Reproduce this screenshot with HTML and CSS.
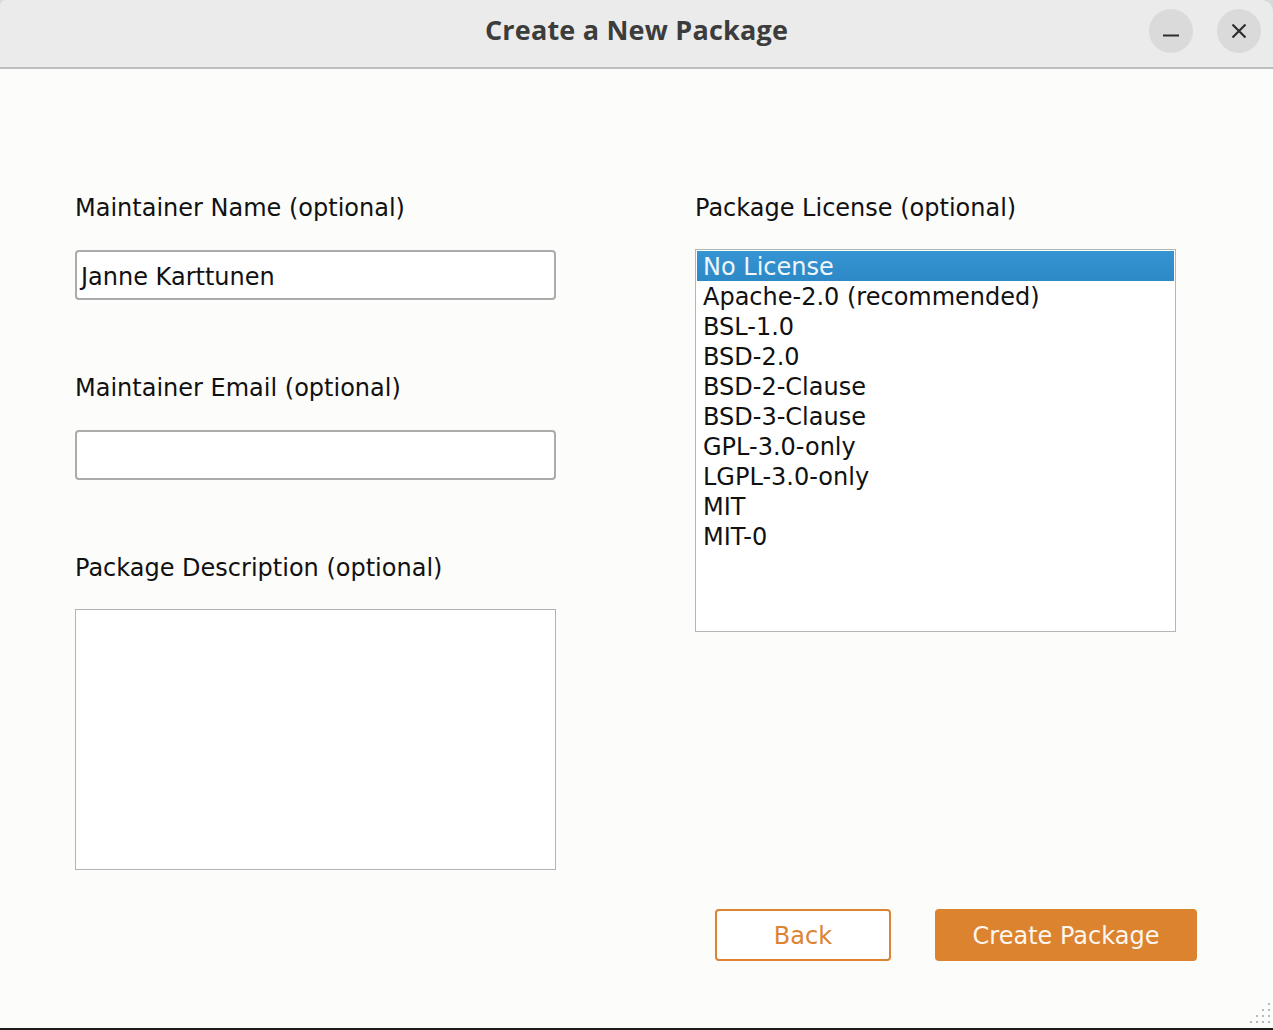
FILE: index.html
```html
<!DOCTYPE html>
<html>
<head>
<meta charset="utf-8">
<title>Create a New Package</title>
<link rel="stylesheet" href="styles.css">
</head>
<body>
<div class="window">
  <header class="titlebar">
    <div class="title">Create a New Package</div>
    <div class="controls">
      <button class="wbtn" aria-label="Minimize">
        <svg width="20" height="20" viewBox="0 0 20 20"><path d="M2 14.5H18" stroke="#2e2e2e" stroke-width="2"/></svg>
      </button>
      <button class="wbtn" aria-label="Close">
        <svg width="20" height="20" viewBox="0 0 20 20"><path d="M3.5 3.5L16.5 16.5M16.5 3.5L3.5 16.5" stroke="#2e2e2e" stroke-width="2.2"/></svg>
      </button>
    </div>
  </header>
  <main class="content">
    <div class="form">
      <div class="col">
        <div class="field">
          <label class="label">Maintainer Name (optional)</label>
          <div class="input">Janne Karttunen</div>
        </div>
        <div class="field">
          <label class="label">Maintainer Email (optional)</label>
          <div class="input"></div>
        </div>
        <div class="field">
          <label class="label">Package Description (optional)</label>
          <div class="textarea"></div>
        </div>
      </div>
      <div class="col">
        <div class="field">
          <label class="label">Package License (optional)</label>
          <ul class="list">
            <li class="item selected">No License</li>
            <li class="item">Apache-2.0 (recommended)</li>
            <li class="item">BSL-1.0</li>
            <li class="item">BSD-2.0</li>
            <li class="item">BSD-2-Clause</li>
            <li class="item">BSD-3-Clause</li>
            <li class="item">GPL-3.0-only</li>
            <li class="item">LGPL-3.0-only</li>
            <li class="item">MIT</li>
            <li class="item">MIT-0</li>
          </ul>
        </div>
      </div>
    </div>
    <div class="actions">
      <button class="btn btn-outline">Back</button>
      <button class="btn btn-primary">Create Package</button>
    </div>
    <svg class="grip" width="22" height="22" viewBox="0 0 22 22">
      <g fill="#b9b9b9">
        <rect x="19" y="0" width="2" height="2"/>
        <rect x="13" y="6" width="2" height="2"/><rect x="19" y="6" width="2" height="2"/>
        <rect x="7" y="12" width="2" height="2"/><rect x="13" y="12" width="2" height="2"/><rect x="19" y="12" width="2" height="2"/>
        <rect x="1" y="18" width="2" height="2"/><rect x="7" y="18" width="2" height="2"/><rect x="13" y="18" width="2" height="2"/><rect x="19" y="18" width="2" height="2"/>
      </g>
    </svg>
  </main>
  <div class="desktop-edge"></div>
</div>
</body>
</html>
```
FILE: styles.css
```css
* { box-sizing: border-box; }
html, body {
  margin: 0;
  padding: 0;
  width: 1273px;
  height: 1030px;
  overflow: hidden;
  background: #d9d9d9;
}
.window {
  width: 1273px;
  height: 1030px;
  display: flex;
  flex-direction: column;
  font-family: "DejaVu Sans", sans-serif;
  color: #111;
}
.titlebar {
  height: 69px;
  flex: none;
  background: #ebebeb;
  border-bottom: 2px solid #bdbdbd;
  border-top-left-radius: 6px;
  border-top-right-radius: 12px;
  display: flex;
  align-items: center;
  justify-content: center;
  position: relative;
}
.title {
  font-family: "Open Sans", "Noto Sans", sans-serif;
  font-weight: 700;
  font-size: 27px;
  color: #3c3c3c;
  letter-spacing: 0.2px;
  margin-top: -9px;
}
.controls {
  position: absolute;
  right: 12px;
  top: 9px;
  display: flex;
  gap: 24px;
}
.wbtn {
  width: 44px;
  height: 44px;
  border-radius: 50%;
  border: none;
  background: #dadada;
  padding: 0;
  display: flex;
  align-items: center;
  justify-content: center;
}
.content {
  flex: 1;
  background: #fcfcfa;
  position: relative;
  padding-top: 124px;
}
.form {
  display: grid;
  grid-template-columns: 481px 481px;
  column-gap: 139px;
  padding-left: 75px;
}
.col {
  display: flex;
  flex-direction: column;
  gap: 73px;
}
.field {
  display: flex;
  flex-direction: column;
}
.label {
  font-size: 24px;
  line-height: 30px;
  height: 30px;
  margin-bottom: 27px;
  color: #111;
}
.col + .col .label { margin-bottom: 26px; }
.input {
  height: 50px;
  width: 481px;
  background: #fff;
  border: 2px solid #ababab;
  border-radius: 4px;
  font-size: 24px;
  line-height: 46px;
  padding-top: 2px;
  padding-left: 4px;
  color: #111;
}
.field:last-child .label { margin-bottom: 26px; }
.textarea {
  width: 481px;
  height: 261px;
  background: #fff;
  border: 1.5px solid #b3b3b3;
}
.list {
  list-style: none;
  margin: 0;
  padding: 1px;
  width: 481px;
  height: 383px;
  background: #fff;
  border: 1px solid #b5b5b5;
}
.item {
  font-size: 24px;
  line-height: 32px;
  height: 30px;
  padding-left: 6px;
  color: #111;
  white-space: nowrap;
}
.item.selected {
  background: linear-gradient(#3594d2, #2d89c6);
  color: #eef5fb;
}
.actions {
  display: flex;
  justify-content: flex-end;
  gap: 44px;
  padding-right: 76px;
  margin-top: 39px;
}
.btn {
  height: 52px;
  border-radius: 4px;
  font-family: "DejaVu Sans", sans-serif;
  font-size: 24px;
  padding: 2px 0 0;
}
.btn-outline {
  width: 176px;
  background: #fff;
  border: 2px solid #dc8432;
  color: #dc8432;
}
.btn-primary {
  width: 262px;
  background: #dc8330;
  border: none;
  color: #fdf6ee;
}
.grip {
  position: absolute;
  right: 2px;
  bottom: 3px;
}
.desktop-edge {
  height: 2px;
  flex: none;
  background: #1c1c1c;
}
```
